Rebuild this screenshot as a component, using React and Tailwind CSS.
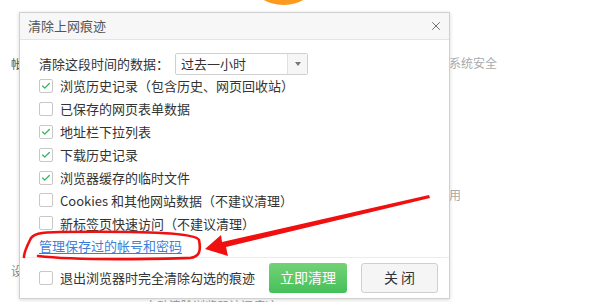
import { Check, X } from "lucide-react";

const font = { fontFamily: '"Noto Sans CJK SC", "Noto Sans", sans-serif' };

const options = [
  { label: "浏览历史记录（包含历史、网页回收站）", checked: true },
  { label: "已保存的网页表单数据", checked: false },
  { label: "地址栏下拉列表", checked: true },
  { label: "下载历史记录", checked: true },
  { label: "浏览器缓存的临时文件", checked: true },
  { label: "Cookies 和其他网站数据（不建议清理）", checked: false },
  { label: "新标签页快速访问（不建议清理）", checked: false },
];

function Box({ checked }) {
  return (
    <span className="flex h-[14px] w-[14px] shrink-0 items-center justify-center rounded-[2px] border border-[#c8c8c8] bg-white">
      {checked && <Check className="h-[10px] w-[10px] text-[#2fb45a]" strokeWidth={3} />}
    </span>
  );
}

export default function App() {
  return (
    <div className="relative h-[302px] w-[600px] overflow-hidden bg-white text-[13px] text-[#333]" style={font}>
      {/* background page fragments */}
      <div className="absolute left-[252px] top-[-40px] h-[45px] w-[63px] rounded-[50%] bg-[#fb9a1c]" />
      <div className="absolute left-[449px] top-[54px] text-[12px] text-[#aaa]">系统安全</div>
      <div className="absolute left-[449px] top-[186px] text-[12px] text-[#aaa]">用</div>
      <div className="absolute left-[11px] top-[55px] text-[12px] text-[#555]">帐</div>
      <div className="absolute left-[11px] top-[262px] text-[12px] text-[#888]">设</div>
      <div className="absolute left-[145px] top-[299px] text-[12px] leading-[14px] text-[#999]">自动清除浏览器访问痕迹</div>

      {/* dialog */}
      <div className="absolute left-[19px] top-[12px] flex h-[287px] w-[431px] flex-col border border-[#d0d0d0] bg-white shadow-[0_1px_4px_rgba(0,0,0,0.15)]">
        <div className="flex h-[27px] items-center justify-between border-b border-[#e4e4e4] bg-[#f7f7f7] pl-[8px] pr-[6px]">
          <span className="text-[13px] text-[#555]">清除上网痕迹</span>
          <X className="h-[14px] w-[14px] text-[#666]" strokeWidth={1.6} />
        </div>

        <div className="flex flex-1 flex-col px-[19px] pt-[13px]">
          <div className="flex h-[22px] items-center">
            <span className="w-[136px]">清除这段时间的数据：</span>
            <div className="flex h-[22px] w-[133px] items-center justify-between rounded-[2px] border border-[#d0d0d0] bg-white">
              <span className="pl-[5px]">过去一小时</span>
              <span className="flex h-full w-[20px] items-center justify-center border-l border-[#e0e0e0] bg-[#f6f6f6]">
                <span className="h-0 w-0 border-x-[3px] border-t-[4px] border-x-transparent border-t-[#777]" />
              </span>
            </div>
          </div>
          <div className="flex flex-col">
            {options.map((o) => (
              <div key={o.label} className="flex h-[22.9px] items-center gap-[7px]">
                <Box checked={o.checked} />
                <span>{o.label}</span>
              </div>
            ))}
          </div>
          <div className="flex h-[22px] items-center">
            <span className="text-[#3e7fd6] underline underline-offset-2">管理保存过的帐号和密码</span>
          </div>
        </div>

        <div className="flex h-[42px] items-center justify-between border-t border-[#ececec] pl-[19px] pr-[11px]">
          <div className="flex items-center gap-[7px]">
            <Box checked={false} />
            <span>退出浏览器时完全清除勾选的痕迹</span>
          </div>
          <div className="flex items-center gap-[14px]">
            <button className="h-[30px] w-[78px] rounded-[3px] bg-gradient-to-b from-[#72d276] to-[#45c05a] text-[14px] text-white">
              立即清理
            </button>
            <button className="h-[30px] w-[77px] rounded-[3px] border border-[#cfcfcf] bg-[#f5f5f5] text-[14px] text-[#333]">
              关 闭
            </button>
          </div>
        </div>
      </div>

      {/* red annotation */}
      <svg className="pointer-events-none absolute left-0 top-0" width="600" height="302" viewBox="0 0 600 302">
        <path
          d="M199 240 C 196 233, 150 231, 60 232 C 40 232, 32 234, 30 240 C 27 246, 24 252, 24 257 M 38 256 C 80 261, 150 259, 190 258 C 200 257, 201 250, 199 240"
          fill="none"
          stroke="#f01010"
          strokeWidth="2.6"
          strokeLinecap="round"
        />
        <polygon points="429,195 430,198 226,247 228,256 205,249 221,235 222,242" fill="#f01010" />
      </svg>
    </div>
  );
}
